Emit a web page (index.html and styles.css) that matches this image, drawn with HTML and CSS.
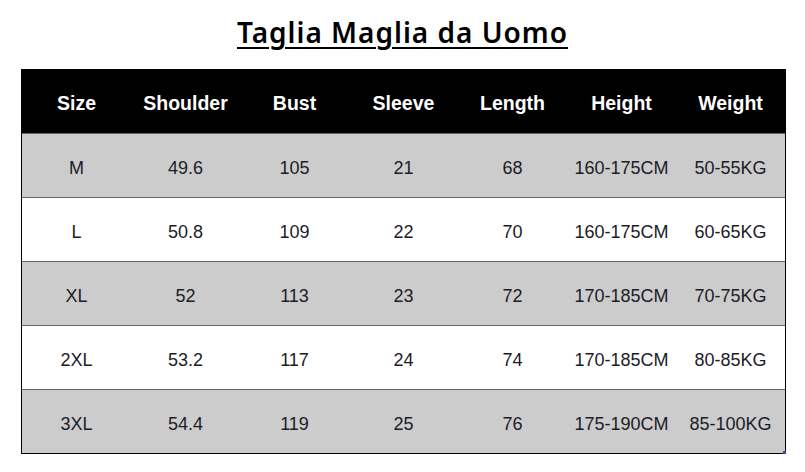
FILE: index.html
```html
<!DOCTYPE html>
<html>
<head>
<meta charset="utf-8">
<link rel="stylesheet" href="styles.css">
</head>
<body>
<div class="page">
  <h1 class="title">Taglia Maglia da Uomo</h1>
  <div class="chart">
    <div class="row head">
      <div>Size</div><div>Shoulder</div><div>Bust</div><div>Sleeve</div><div>Length</div><div>Height</div><div>Weight</div>
    </div>
    <div class="row gray">
      <div>M</div><div>49.6</div><div>105</div><div>21</div><div>68</div><div>160-175CM</div><div>50-55KG</div>
    </div>
    <div class="row">
      <div>L</div><div>50.8</div><div>109</div><div>22</div><div>70</div><div>160-175CM</div><div>60-65KG</div>
    </div>
    <div class="row gray">
      <div>XL</div><div>52</div><div>113</div><div>23</div><div>72</div><div>170-185CM</div><div>70-75KG</div>
    </div>
    <div class="row">
      <div>2XL</div><div>53.2</div><div>117</div><div>24</div><div>74</div><div>170-185CM</div><div>80-85KG</div>
    </div>
    <div class="row gray">
      <div>3XL</div><div>54.4</div><div>119</div><div>25</div><div>76</div><div>175-190CM</div><div>85-100KG</div>
    </div>
    <span class="handle"></span>
  </div>
</div>
</body>
</html>
```

FILE: styles.css
```css
html, body {
  margin: 0;
  padding: 0;
  background: #ffffff;
}
.page {
  width: 805px;
  height: 472px;
}
.title {
  margin: 0;
  height: 69px;
  box-sizing: border-box;
  padding-top: 14px;
  text-align: center;
  font-family: "Noto Sans", sans-serif;
  font-weight: 600;
  font-size: 28px;
  letter-spacing: 1px;
  line-height: 36px;
  color: #000;
  text-decoration: underline;
  text-decoration-thickness: 2px;
  text-underline-offset: 4px;
}
.chart {
  position: relative;
  margin-left: 21px;
  width: 765px;
  box-sizing: border-box;
  border: 1px solid #000;
}
.row {
  display: grid;
  grid-template-columns: repeat(7, 1fr);
  height: 64px;
  box-sizing: border-box;
  padding-top: 5px;
  border-top: 1px solid #666;
  align-items: center;
  text-align: center;
  font-family: "Liberation Sans", Arial, sans-serif;
  font-size: 18px;
  color: #1c1c28;
}
.row.head {
  height: 63px;
  padding-top: 3px;
  border-top: none;
  background: #000;
  color: #fff;
  font-weight: bold;
  font-size: 19.5px;
}
.row.gray {
  background: #cccccc;
}
.handle {
  position: absolute;
  right: -1px;
  bottom: -1px;
  width: 3px;
  height: 3px;
  background: #2f4fa8;
}
```
